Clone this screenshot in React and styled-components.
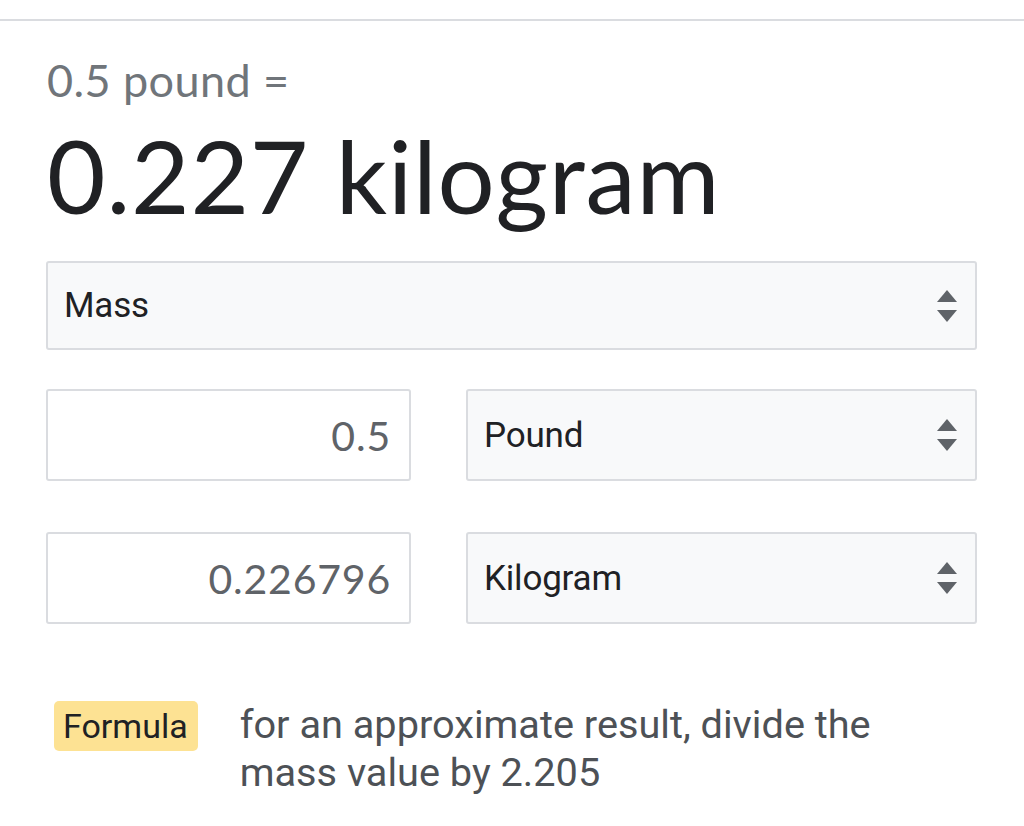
import React from 'react'
import styled, { createGlobalStyle } from 'styled-components';

const GlobalStyle = createGlobalStyle`
    html, body {
        margin: 0;
        padding: 0;
        background: #fff;
    }
    body {
        font-family: Roboto, "Liberation Sans", sans-serif;
        color: #202124;
    }
`;

const SortArrows = () => (
    <svg width="22" height="32" viewBox="0 0 22 32">
        <path d="M11 0 L21 12 L1 12 Z" fill="#5f6368" />
        <path d="M1 20 L21 20 L11 32 Z" fill="#5f6368" />
    </svg>
);

const UnitSelect = ({ label, tall }) => (
    <SelectBox $tall={tall}>
        <span>{label}</span>
        <SortArrows />
    </SelectBox>
);

const App = () => {
    return (
        <Page>
            <GlobalStyle />
            <TopRule />
            <Converter>
                <Question>0.5 pound =</Question>
                <Answer>0.227 kilogram</Answer>

                <Fields>
                    <UnitSelect label="Mass" />
                    <FieldRow $gap={39}>
                        <ValueBox>0.5</ValueBox>
                        <UnitSelect label="Pound" tall />
                    </FieldRow>
                    <FieldRow $gap={51}>
                        <ValueBox>0.226796</ValueBox>
                        <UnitSelect label="Kilogram" tall />
                    </FieldRow>
                </Fields>

                <FormulaRow>
                    <FormulaTag>Formula</FormulaTag>
                    <FormulaText>for an approximate result, divide the mass value by 2.205</FormulaText>
                </FormulaRow>
            </Converter>
        </Page>
    )
}

export default App;

const Page = styled.div`
    width: 1024px;
    min-height: 826px;
    padding-top: 19px;
    box-sizing: border-box;
`;

const TopRule = styled.div`
    height: 2px;
    background-color: #dadce0;
`;

const Converter = styled.div`
    display: flex;
    flex-direction: column;
    padding: 0 47px 0 46px;
`;

const Question = styled.div`
    font-family: Lato, "Open Sans", sans-serif;
    font-size: 45px;
    letter-spacing: 0.4px;
    line-height: 52px;
    color: #70757a;
    margin-top: 33px;
    padding-left: 1px;
`;

const Answer = styled.div`
    font-family: Lato, "Open Sans", sans-serif;
    font-size: 101px;
    letter-spacing: 0.8px;
    line-height: 110px;
    color: #202124;
    margin-top: 14px;
    padding-left: 1px;
`;

const Fields = styled.div`
    display: flex;
    flex-direction: column;
    margin-top: 31px;
`;

const FieldRow = styled.div`
    display: grid;
    grid-template-columns: 365px 1fr;
    column-gap: 55px;
    margin-top: ${p => p.$gap}px;
`;

const SelectBox = styled.div`
    display: flex;
    align-items: center;
    justify-content: space-between;
    height: ${p => p.$tall ? 92 : 89}px;
    padding: 0 17px 0 16px;
    box-sizing: border-box;
    background-color: #f8f9fa;
    border: 2px solid #dadce0;
    border-radius: 3px;

    >span {
        font-size: 35px;
        letter-spacing: -0.2px;
        color: #202124;
    }
`;

const ValueBox = styled.div`
    display: flex;
    align-items: center;
    justify-content: flex-end;
    height: 92px;
    padding: 0 18px;
    box-sizing: border-box;
    background-color: #fff;
    border: 2px solid #dadce0;
    border-radius: 3px;
    font-family: Lato, "Open Sans", sans-serif;
    font-size: 41px;
    letter-spacing: 0.8px;
    color: #5f6368;
`;

const FormulaRow = styled.div`
    display: flex;
    align-items: baseline;
    margin-top: 77px;
    padding-left: 8px;
`;

const FormulaTag = styled.div`
    flex-shrink: 0;
    background-color: #fde293;
    border-radius: 5px;
    padding: 4px 10px 4px 9px;
    font-size: 34px;
    line-height: 42px;
    color: #202124;
    margin-right: 42px;
`;

const FormulaText = styled.div`
    font-size: 39.7px;
    line-height: 48px;
    color: #4d5156;
    max-width: 680px;
`;
